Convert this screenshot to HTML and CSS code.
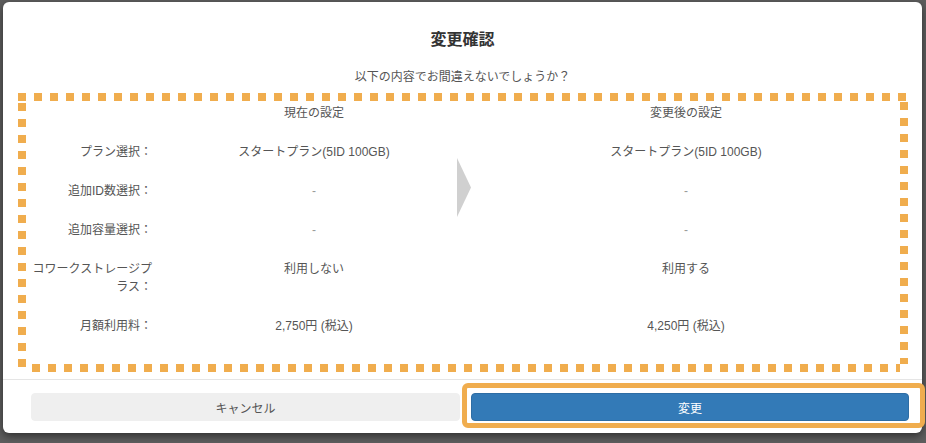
FILE: index.html
```html
<!DOCTYPE html>
<html lang="ja">
<head>
  <meta charset="UTF-8">
  <meta name="viewport" content="width=device-width, initial-scale=1.0">
  <title>変更確認</title>
  <link rel="stylesheet" href="styles.css">
</head>
<body>

  <div class="modal">
    <!-- Header -->
    <div class="modal-header">
      <h4 class="modal-title">変更確認</h4>
      <p class="modal-lead">以下の内容でお間違えないでしょうか？</p>
    </div>

    <!-- Compare table -->
    <div class="modal-body">
      <div class="compare">
        <div class="compare-grid">
          <div class="arrow">
            <svg width="14" height="59" viewBox="0 0 14 59"><polygon points="0,0 14,29.5 0,59" fill="#d0d0d0"/></svg>
          </div>

          <span class="label"></span>
          <span class="cur">現在の設定</span>
          <span class="new">変更後の設定</span>

          <span class="label">プラン選択：</span>
          <span class="cur">スタートプラン(5ID 100GB)</span>
          <span class="new">スタートプラン(5ID 100GB)</span>

          <span class="label">追加ID数選択：</span>
          <span class="cur empty">-</span>
          <span class="new empty">-</span>

          <span class="label">追加容量選択：</span>
          <span class="cur empty">-</span>
          <span class="new empty">-</span>

          <span class="label">コワークストレージプラス：</span>
          <span class="cur">利用しない</span>
          <span class="new">利用する</span>

          <span class="label">月額利用料：</span>
          <span class="cur">2,750円 (税込)</span>
          <span class="new">4,250円 (税込)</span>
        </div>
      </div>
    </div>

    <!-- Footer Buttons -->
    <div class="modal-footer">
      <button class="btn btn-cancel">キャンセル</button>
      <button class="btn btn-primary">変更</button>
    </div>

    <div class="highlight"></div>
  </div>

</body>
</html>
```

FILE: styles.css
```css
/* backdrop behind the dialog */
body {
  margin: 0;
  padding: 2px 0 0 3px;
  height: 100vh;
  box-sizing: border-box;
  overflow: hidden;
  background-color: #5e5e5e;
  font-family: "Liberation Sans", "Noto Sans CJK JP", sans-serif;
  font-size: 12px;
  line-height: 18px;
  color: #555;
}

.modal {
  position: relative;
  width: 919px;
  background: #fff;
  border-radius: 6px;
  box-shadow: 0 3px 9px rgba(0, 0, 0, 0.5);
}

.modal-header {
  padding: 27px 15px 0;
  text-align: center;
}

.modal-title {
  margin: 0;
  font-size: 16px;
  line-height: 22px;
  font-weight: bold;
  color: #333;
}

.modal-lead {
  margin: 17px 0 0;
}

.modal-body {
  padding: 7px 14px 7px 15px;
}

/* orange dotted frame, drawn with square dots */
.compare {
  height: 279px;
  box-sizing: border-box;
  padding: 11px 0 0 13px;
  background:
    repeating-linear-gradient(to right, #f0ad4e 0 8px, transparent 8px 16px) left top / 100% 8px no-repeat,
    repeating-linear-gradient(to right, #f0ad4e 0 8px, transparent 8px 16px) 14px bottom / calc(100% - 22px) 8px no-repeat,
    repeating-linear-gradient(to bottom, #f0ad4e 0 8px, transparent 8px 16px) left 10px / 8px calc(100% - 10px) no-repeat,
    repeating-linear-gradient(to bottom, #f0ad4e 0 8px, transparent 8px 16px) right 9px / 8px calc(100% - 17px) no-repeat;
}

.compare-grid {
  display: grid;
  grid-template-columns: 135px 296px 76px 296px;
  row-gap: 21px;
  align-items: start;
}

.label {
  grid-column: 1;
  padding-right: 14px;
  text-align: right;
}

.cur {
  grid-column: 2;
  text-align: center;
}

.new {
  grid-column: 4;
  text-align: center;
}

.empty {
  color: #999;
}

.arrow {
  grid-column: 3;
  grid-row: 2 / span 5;
  margin: 15px 0 0 -5px;
  line-height: 0;
}

.modal-footer {
  display: grid;
  grid-template-columns: 429px 438px;
  column-gap: 11px;
  padding: 13px 13px 12px 28px;
  border-top: 1px solid #e5e5e5;
}

.btn {
  height: 28px;
  border: 1px solid transparent;
  border-radius: 4px;
  font-family: inherit;
  font-size: 12px;
  cursor: pointer;
}

.btn-cancel {
  background: #efefef;
  border-color: #efefef;
  color: #555;
}

.btn-primary {
  background: #337ab7;
  border-color: #2e6da4;
  color: #fff;
}

/* orange marker around the submit button */
.highlight {
  position: absolute;
  left: 459px;
  top: 381px;
  width: 463px;
  height: 45px;
  box-sizing: border-box;
  border: 5px solid #f0ad4e;
  border-radius: 6px;
  pointer-events: none;
}
```
